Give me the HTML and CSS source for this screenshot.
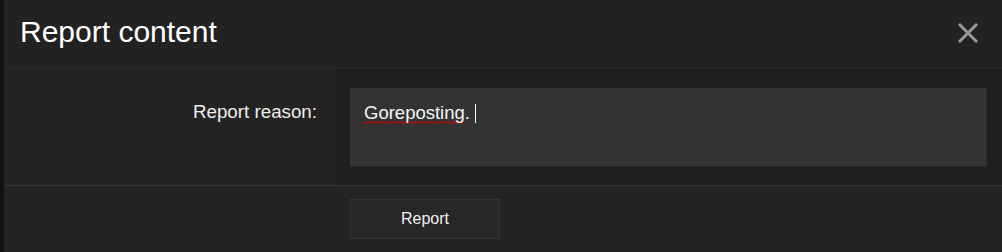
FILE: index.html
```html
<!DOCTYPE html>
<html>
<head>
<meta charset="utf-8">
<link rel="stylesheet" href="styles.css">
</head>
<body>
<div class="dialog">
  <div class="header">
    <h1 class="title">Report content</h1>
    <button class="close" aria-label="Close">
      <svg width="20" height="20" viewBox="0 0 20 20"><path d="M2 2 L18 18 M18 2 L2 18" stroke="#9a9a9a" stroke-width="3" stroke-linecap="square" fill="none"/></svg>
    </button>
  </div>
  <div class="row">
    <div class="label">Report reason:</div>
    <div class="field">
      <div class="input"><span class="typo">Goreposting</span>. <span class="caret"></span></div>
    </div>
  </div>
  <div class="footer">
    <button class="btn">Report</button>
  </div>
</div>
</body>
</html>
```
FILE: styles.css
```css
html, body {
  margin: 0;
  padding: 0;
  height: 100%;
}
body {
  background: #111111;
  padding-left: 4px;
  box-sizing: border-box;
  font-family: "Liberation Sans", Arial, sans-serif;
  overflow: hidden;
}
.dialog {
  background: #232323;
  height: 252px;
  display: flex;
  flex-direction: column;
}
.header {
  height: 69px;
  box-sizing: border-box;
  border-bottom: 1px solid #2b2b2b;
  background: #222222;
  display: flex;
  align-items: flex-start;
  justify-content: space-between;
  padding: 0 24px 0 16px;
}
.title {
  margin: 0;
  padding-top: 15px;
  font-size: 30px;
  font-weight: normal;
  color: #ffffff;
  line-height: 34px;
}
.close {
  background: none;
  border: 0;
  padding: 0;
  margin-top: 23px;
  width: 20px;
  height: 20px;
  display: block;
}
.close svg { display: block; }
.row {
  display: flex;
  height: 117px;
  box-sizing: border-box;
  border-bottom: 1px solid #353535;
}
.label {
  width: 330px;
  box-sizing: border-box;
  text-align: right;
  padding: 33px 17px 0 0;
  font-size: 18.75px;
  line-height: 20px;
  color: #ededed;
}
.field {
  flex: 1;
  background: #1f1f1f;
  padding: 19px 15px 0 15px;
  border-left: 1px solid #262626;
}
.input {
  height: 79px;
  box-sizing: border-box;
  background: #333333;
  border-right: 1px solid #2a2a2a;
  border-bottom: 1px solid #2a2a2a;
  padding: 15px 14px;
  font-size: 18.5px;
  line-height: 20px;
  color: #f5f5f5;
}
.typo {
  padding-bottom: 1px;
  background-image: url("data:image/svg+xml;utf8,<svg xmlns='http://www.w3.org/2000/svg' width='6' height='3'><path d='M0 2.5 L1.5 0.5 L3 2.5 L4.5 0.5 L6 2.5' stroke='%23e00000' stroke-width='1' fill='none'/></svg>");
  background-repeat: repeat-x;
  background-position: 0 100%;
  background-size: 6px 3px;
}
.caret {
  display: inline-block;
  width: 1px;
  height: 19px;
  background: #ffffff;
  vertical-align: -4px;
}
.footer {
  flex: 1;
  padding: 13px 0 0 346px;
}
.btn {
  width: 150px;
  height: 40px;
  box-sizing: border-box;
  background: #282828;
  border: 1px solid #353535;
  color: #f0f0f0;
  font-family: "Liberation Sans", Arial, sans-serif;
  font-size: 16px;
  padding: 0;
}
```
